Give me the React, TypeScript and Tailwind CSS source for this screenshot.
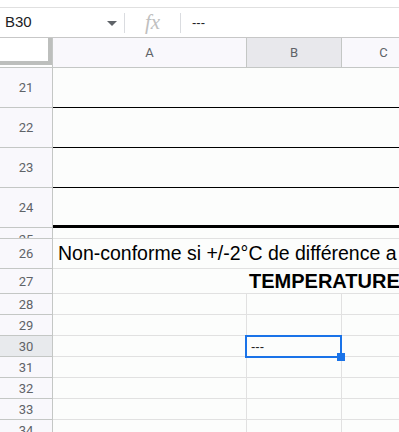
import React from "react";

const hdrText = "text-[#5f6368] text-[13px]";

function RowHeader({ n, h, active }: { n: number; h: number; active?: boolean }) {
  return (
    <div
      className={`w-[53px] shrink-0 border-r border-b border-[#c4c7c5] flex justify-center items-center overflow-hidden ${hdrText} ${active ? "bg-[#e8eaed]" : "bg-[#f9f8fc]"}`}
      style={{ height: h }}
    >
      <span className="leading-none">{n}</span>
    </div>
  );
}

function GridRow({ n, h, active, selected }: { n: number; h: number; active?: boolean; selected?: boolean }) {
  return (
    <div className="flex" style={{ height: h }}>
      <RowHeader n={n} h={h} active={active} />
      <div className="w-[194px] shrink-0 border-r border-b border-[#e1e1e1] bg-[#fcfdfc]" />
      <div className="relative w-[95px] shrink-0 border-r border-b border-[#e1e1e1] bg-[#fcfdfc]">
        {selected && (
          <div className="absolute left-[-2px] top-[-1px] w-[97px] h-[23px] border-2 border-[#1a73e8] z-10 flex items-center pl-[4px]">
            <span className="text-[13px] text-[#222] leading-none" style={{ fontFamily: "'Liberation Sans', Arial, sans-serif" }}>---</span>
            <div className="absolute right-[-5px] bottom-[-5px] w-[8px] h-[8px] bg-[#1a73e8]" />
          </div>
        )}
      </div>
      <div className="flex-1 border-b border-[#e1e1e1] bg-[#fcfdfc]" />
    </div>
  );
}

export default function App() {
  return (
    <div
      className="w-[399px] h-[432px] overflow-hidden bg-white"
      style={{ fontFamily: "Roboto, 'Liberation Sans', Arial, sans-serif" }}
    >
      {/* top strip */}
      <div className="h-[8px] border-b border-[#e0e0e0] bg-white" />
      {/* formula bar */}
      <div className="h-[30px] flex items-center border-b border-[#c7c7c7] bg-white">
        <div className="w-[124px] h-full flex items-center pl-[5px] pr-[7px] justify-between">
          <span className="text-[15px] text-[#202124]" style={{ fontFamily: "'Liberation Sans', Arial, sans-serif" }}>B30</span>
          <div className="w-0 h-0 border-l-[5px] border-r-[5px] border-t-[5px] border-l-transparent border-r-transparent border-t-[#5f6368] mt-[1px]" />
        </div>
        <div className="w-px h-[20px] bg-[#dadce0]" />
        <div className="w-[55px] flex items-center justify-center">
          <span className="text-[21px] italic text-[#c0c0c0] leading-none" style={{ fontFamily: "'Liberation Serif', 'Times New Roman', serif" }}>fx</span>
        </div>
        <div className="w-px h-[20px] bg-[#dadce0]" />
        <span className="ml-[11px] text-[13px] text-[#202124]" style={{ fontFamily: "'Liberation Sans', Arial, sans-serif" }}>---</span>
      </div>
      {/* column headers */}
      <div className="flex h-[30px] border-b border-[#c4c7c5]">
        <div className="w-[53px] shrink-0 h-full border-r border-[#c4c7c5] bg-white">
          <div className="w-[52px] h-[27px] border-r-4 border-b-4 border-[#bdbfbd] bg-white" />
        </div>
        <div className={`w-[194px] shrink-0 border-r border-[#c4c7c5] bg-[#f9f8fc] flex items-center justify-center ${hdrText}`}>A</div>
        <div className={`w-[95px] shrink-0 border-r border-[#c4c7c5] bg-[#e8e8ec] flex items-center justify-center ${hdrText}`}>B</div>
        <div className={`flex-1 bg-[#f9f8fc] flex items-center justify-center pl-[26px] ${hdrText}`}>C</div>
      </div>
      {/* rows 21-24 with black borders */}
      {[21, 22, 23].map((n) => (
        <div key={n} className="flex h-[40px]">
          <RowHeader n={n} h={40} />
          <div className="flex-1 border-b border-black bg-[#fcfdfc]" />
        </div>
      ))}
      <div className="flex h-[40px]">
        <RowHeader n={24} h={40} />
        <div className="flex-1 border-b-[3px] border-black bg-[#fcfdfc]" />
      </div>
      {/* row 25 (mostly hidden) */}
      <div className="flex h-[11px]">
        <div className={`w-[53px] shrink-0 h-[11px] border-r border-b border-[#c4c7c5] bg-[#f9f8fc] flex justify-center overflow-hidden ${hdrText}`}>
          <span className="leading-none mt-[5px]">25</span>
        </div>
        <div className="flex-1 border-b border-[#e1e1e1] bg-[#fcfdfc]" />
      </div>
      {/* row 26 */}
      <div className="flex h-[30px]">
        <RowHeader n={26} h={30} />
        <div className="flex-1 border-b border-[#e1e1e1] bg-[#fcfdfc] flex items-center pl-[5px] overflow-hidden whitespace-nowrap">
          <span className="text-[19.5px] text-black leading-none" style={{ fontFamily: "'Liberation Sans', Arial, sans-serif" }}>
            Non-conforme si +/-2°C de différence a
          </span>
        </div>
      </div>
      {/* row 27 */}
      <div className="flex h-[25px]">
        <RowHeader n={27} h={25} />
        <div className="flex-1 border-b border-[#e1e1e1] bg-[#fcfdfc] flex items-center pl-[196px] overflow-hidden whitespace-nowrap">
          <span className="text-[20px] font-bold text-black leading-none" style={{ fontFamily: "'Liberation Sans', Arial, sans-serif" }}>
            TEMPERATURE
          </span>
        </div>
      </div>
      <GridRow n={28} h={21} />
      <GridRow n={29} h={21} />
      <GridRow n={30} h={21} active selected />
      <GridRow n={31} h={21} />
      <GridRow n={32} h={21} />
      <GridRow n={33} h={21} />
      <GridRow n={34} h={21} />
    </div>
  );
}
